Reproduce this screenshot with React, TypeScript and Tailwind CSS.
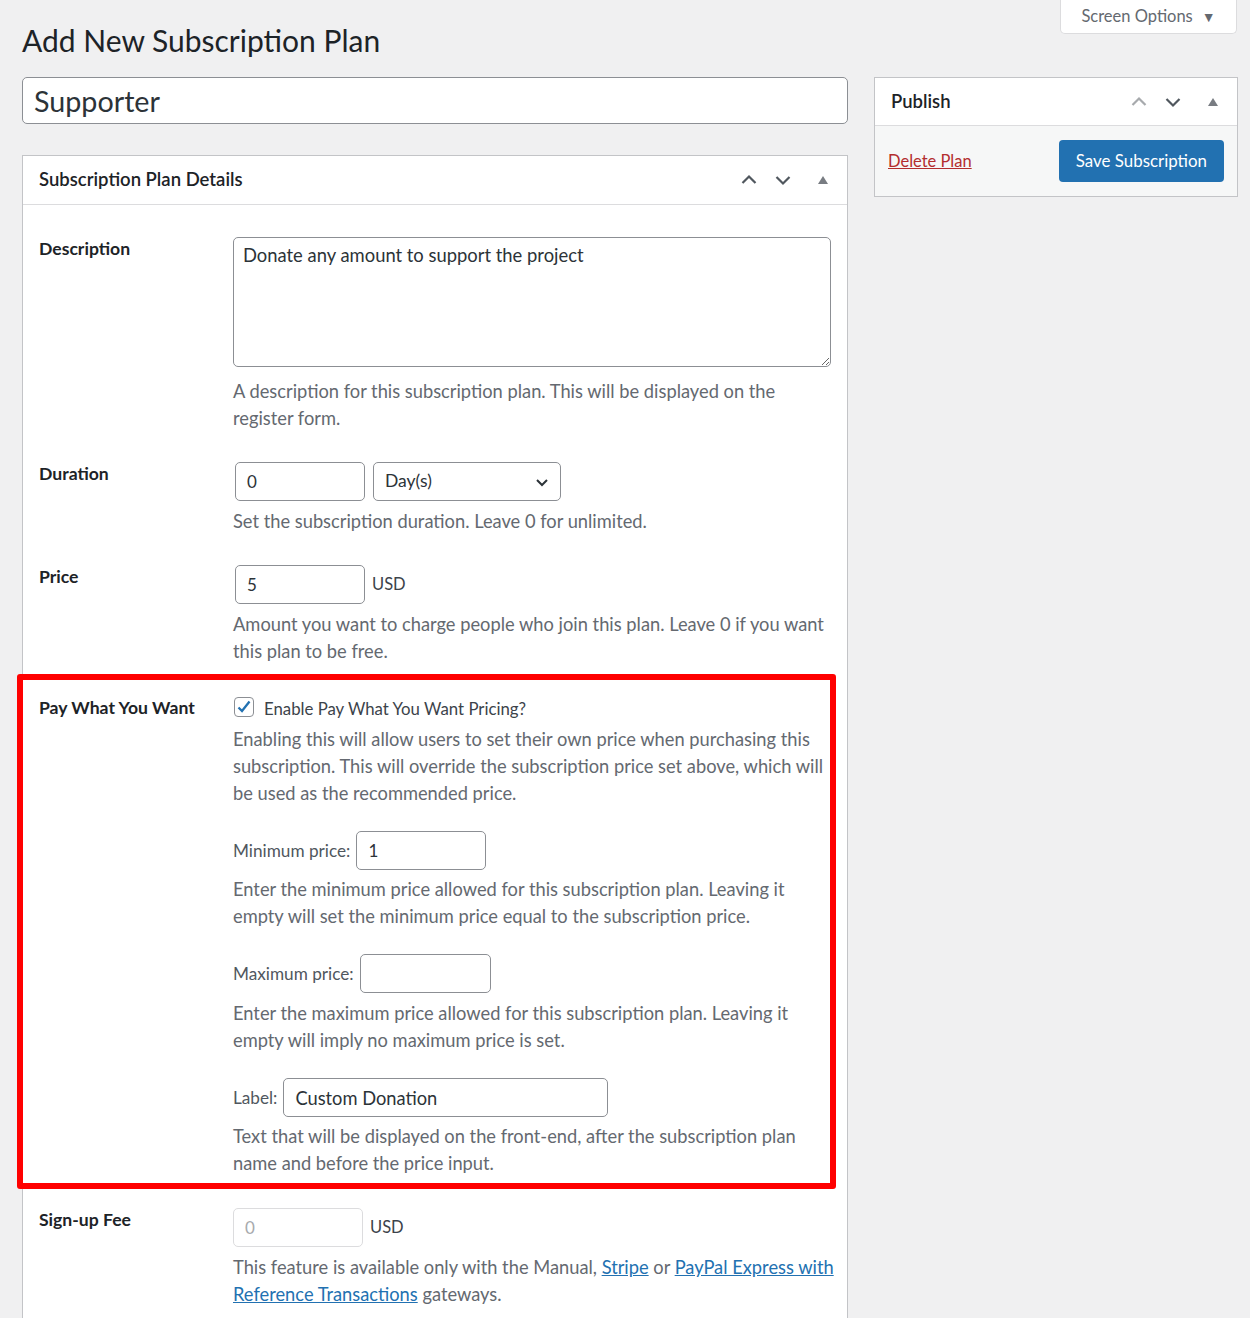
import React from 'react';

function ChevronUp({ light }: { light?: boolean }) {
  return (
    <svg width="18" height="18" viewBox="0 0 18 18" className={light ? 'text-[#a7aaad]' : 'text-[#50575e]'}>
      <polyline points="2.5,12 9,5.5 15.5,12" fill="none" stroke="currentColor" strokeWidth="2.2" />
    </svg>
  );
}

function ChevronDown() {
  return (
    <svg width="18" height="18" viewBox="0 0 18 18" className="text-[#50575e]">
      <polyline points="2.5,6 9,12.5 15.5,6" fill="none" stroke="currentColor" strokeWidth="2.2" />
    </svg>
  );
}

function Caret() {
  return (
    <svg width="12" height="10" viewBox="0 0 12 10" className="text-[#787c82]">
      <polygon points="6,1 11,9 1,9" fill="currentColor" />
    </svg>
  );
}

function BoxHeader({ title, upLight }: { title: string; upLight?: boolean }) {
  return (
    <div className="flex items-center justify-between border-b border-[#dcdcde] pl-[16px] pr-[4px]">
      <h2 className="text-[18.5px] font-semibold text-[#1d2327]">{title}</h2>
      <div className="flex items-center">
        <span className="flex w-[28px] justify-center"><ChevronUp light={upLight} /></span>
        <span className="flex w-[40px] justify-center"><ChevronDown /></span>
        <span className="flex w-[40px] justify-center"><Caret /></span>
      </div>
    </div>
  );
}

function Help({ children }: { children: React.ReactNode }) {
  return <p className="text-[18.3px] leading-[27px] text-[#646970]">{children}</p>;
}

function Row({ label, children, className = '' }: { label: string; children: React.ReactNode; className?: string }) {
  return (
    <div className={`flex ${className}`}>
      <div className="w-[194px] shrink-0 -mt-[1px] text-[17.6px] font-bold leading-[26px] text-[#1d2327]">{label}</div>
      <div className="flex-1">{children}</div>
    </div>
  );
}

const inputCls =
  'h-[39px] rounded-[5px] border border-[#8c8f94] bg-white px-[11px] text-[17px] text-[#2c3338] outline-none';

export default function App() {
  return (
    <div className="min-h-screen bg-[#f0f0f1] pl-[22px] pr-[13px] font-[Lato,'Liberation_Sans',sans-serif]">
      {/* top bar */}
      <div className="flex items-start justify-between">
        <h1 className="pt-[21px] text-[30px] leading-[39px] text-[#1d2327]">Add New Subscription Plan</h1>
        <div className="flex h-[34px] w-[177px] items-center justify-center gap-[9px] rounded-b-[5px] border border-t-0 border-[#dcdcde] bg-white text-[16.5px] text-[#646970]">
          <span>Screen Options</span>
          <span className="text-[14px]">▼</span>
        </div>
      </div>

      <div className="mt-[17px] flex gap-[26px]">
        {/* main column */}
        <div className="w-[826px] shrink-0">
          <input
            readOnly
            defaultValue="Supporter"
            className="h-[47px] w-full rounded-[5px] border border-[#8c8f94] bg-white px-[11px] text-[28.7px] text-[#2c3338] outline-none"
          />

          <div className="mt-[31px] border border-[#c3c4c7] bg-white">
            <div className="h-[49px] [&>div]:h-full">
              <BoxHeader title="Subscription Plan Details" />
            </div>

            <div className="px-[16px] pt-[32px] pb-[40px]">
              {/* Description */}
              <Row label="Description">
                <textarea
                  readOnly
                  defaultValue="Donate any amount to support the project"
                  className="block h-[130px] w-full rounded-[5px] border border-[#8c8f94] px-[9px] pt-[4px] text-[18.4px] leading-[26px] text-[#2c3338] outline-none"
                />
                <div className="mt-[11px]">
                  <Help>A description for this subscription plan. This will be displayed on the register form.</Help>
                </div>
              </Row>

              {/* Duration */}
              <Row label="Duration" className="mt-[30px]">
                <div className="flex items-center">
                  <input readOnly defaultValue="0" className={`${inputCls} ml-[2px] w-[130px]`} />
                  <div className="ml-[8px] flex h-[39px] w-[188px] items-center justify-between rounded-[5px] border border-[#8c8f94] pl-[11px] pr-[10px] text-[17.5px] text-[#2c3338]">
                    <span>Day(s)</span>
                    <svg width="16" height="16" viewBox="0 0 16 16" className="text-[#2c3338]">
                      <polyline points="3,6 8,11 13,6" fill="none" stroke="currentColor" strokeWidth="2" />
                    </svg>
                  </div>
                </div>
                <div className="mt-[7px]">
                  <Help>Set the subscription duration. Leave 0 for unlimited.</Help>
                </div>
              </Row>

              {/* Price */}
              <Row label="Price" className="mt-[30px]">
                <div className="flex items-center">
                  <input readOnly defaultValue="5" className={`${inputCls} ml-[2px] w-[130px]`} />
                  <span className="ml-[7px] text-[16.5px] text-[#3c434a]">USD</span>
                </div>
                <div className="mt-[7px]">
                  <Help>Amount you want to charge people who join this plan. Leave 0 if you want this plan to be free.</Help>
                </div>
              </Row>

              {/* Pay What You Want */}
              <div className="relative mt-[31px]">
                <div className="pointer-events-none absolute -top-[22px] -bottom-[12px] -left-[22px] -right-[5px] rounded-[3px] border-[6px] border-[#ff0000]" />
                <Row label="Pay What You Want">
                  <div className="flex h-[26px] items-center">
                    <span className="flex h-[20px] w-[20px] items-center justify-center rounded-[4px] border border-[#8c8f94] bg-white -mt-[4px] ml-[1px]">
                      <svg width="16" height="16" viewBox="0 0 16 16">
                        <polyline points="2.5,8.5 6,12 13.5,2.5" fill="none" stroke="#2271b1" strokeWidth="2.3" />
                      </svg>
                    </span>
                    <span className="ml-[10px] text-[16.8px] text-[#3c434a]">Enable Pay What You Want Pricing?</span>
                  </div>
                  <div className="mt-[4px]">
                    <Help>
                      Enabling this will allow users to set their own price when purchasing this subscription. This will
                      override the subscription price set above, which will be used as the recommended price.
                    </Help>
                  </div>

                  <div className="mt-[24px] flex items-center">
                    <span className="text-[17.2px] text-[#50575e]">Minimum price:</span>
                    <input readOnly defaultValue="1" className={`${inputCls} ml-[6px] w-[130px]`} />
                  </div>
                  <div className="mt-[6px]">
                    <Help>
                      Enter the minimum price allowed for this subscription plan. Leaving it empty will set the minimum
                      price equal to the subscription price.
                    </Help>
                  </div>

                  <div className="mt-[24px] flex items-center">
                    <span className="text-[17.2px] text-[#50575e]">Maximum price:</span>
                    <input readOnly defaultValue="" className={`${inputCls} ml-[6px] w-[131px]`} />
                  </div>
                  <div className="mt-[7px]">
                    <Help>
                      Enter the maximum price allowed for this subscription plan. Leaving it empty will imply no maximum
                      price is set.
                    </Help>
                  </div>

                  <div className="mt-[24px] flex items-center">
                    <span className="text-[17.2px] text-[#50575e]">Label:</span>
                    <input
                      readOnly
                      defaultValue="Custom Donation"
                      className={`${inputCls} ml-[6px] w-[325px] !text-[18.3px]`}
                    />
                  </div>
                  <div className="mt-[6px]">
                    <Help>
                      Text that will be displayed on the front-end, after the subscription plan name and before the price
                      input.
                    </Help>
                  </div>
                </Row>
              </div>

              {/* Sign-up Fee */}
              <Row label="Sign-up Fee" className="mt-[31px]">
                <div className="flex items-center">
                  <input
                    readOnly
                    disabled
                    defaultValue="0"
                    className="h-[39px] w-[130px] rounded-[5px] border border-[#dcdcde] bg-white px-[11px] text-[17px] text-[#a7aaad] outline-none"
                  />
                  <span className="ml-[7px] text-[16.5px] text-[#3c434a]">USD</span>
                </div>
                <div className="mt-[7px] -mr-[10px]">
                  <Help>
                    This feature is available only with the Manual,{' '}
                    <a href="#" className="text-[#2271b1] underline">Stripe</a> or{' '}
                    <a href="#" className="text-[#2271b1] underline">PayPal Express with Reference Transactions</a>{' '}
                    gateways.
                  </Help>
                </div>
              </Row>
            </div>
          </div>
        </div>

        {/* sidebar */}
        <div className="w-[364px] shrink-0">
          <div className="border border-[#c3c4c7] bg-white">
            <div className="h-[48px] [&>div]:h-full">
              <BoxHeader title="Publish" upLight />
            </div>
            <div className="flex items-center justify-between bg-[#f6f7f7] py-[14px] pl-[13px] pr-[13px]">
              <a href="#" className="text-[16.5px] text-[#b32d2e] underline">Delete Plan</a>
              <button className="h-[42px] rounded-[4px] bg-[#2271b1] px-[17px] text-[16.9px] text-white">
                Save Subscription
              </button>
            </div>
          </div>
        </div>
      </div>
    </div>
  );
}
